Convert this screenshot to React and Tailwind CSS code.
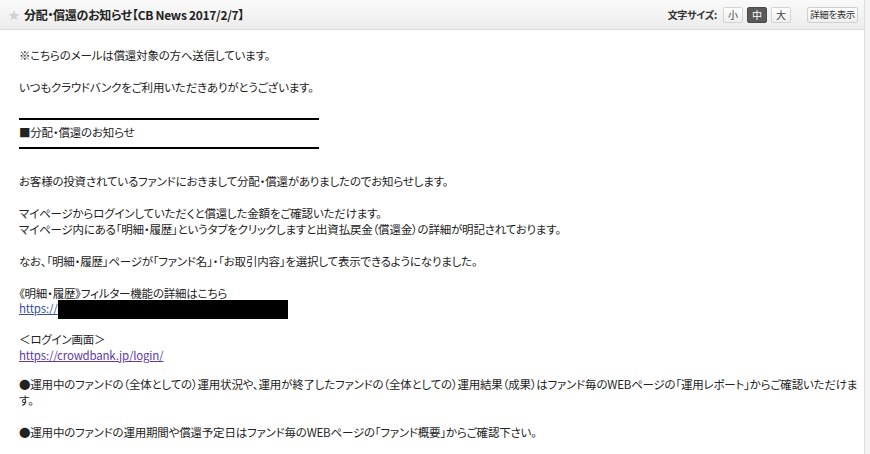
import React from 'react'

const FONT = "font-['Noto_Sans_CJK_JP','Noto_Sans',sans-serif]"

function SizeButton({ label, active }) {
  return (
    <span
      className={
        active
          ? 'flex h-[16px] w-[20px] items-center justify-center rounded-[2px] border border-[#4a4a4a] bg-[#5a5a5a] text-[10px] text-white'
          : 'flex h-[16px] w-[20px] items-center justify-center rounded-[2px] border border-[#d4d4d4] bg-gradient-to-b from-white to-[#eeeeee] text-[10px] text-[#444]'
      }
    >
      {label}
    </span>
  )
}

function Line({ children, className = '' }) {
  return <p className={'h-[15.5px] whitespace-nowrap leading-[15.5px] ' + className}>{children}</p>
}

export default function App() {
  return (
    <div className={`flex h-[454px] w-[870px] overflow-hidden bg-[#f4f4f4] ${FONT} [font-feature-settings:'palt']`}>
      <div className="flex w-[865px] flex-col overflow-hidden border-r border-[#dddddd] bg-white">
        <header className="flex h-[30px] shrink-0 items-center border-b border-[#dcdcdc] bg-gradient-to-b from-[#fafafa] to-[#ececec] pl-[8px] pr-[6px]">
          <span className="text-[12px] leading-none text-[#d0d0d0]">★</span>
          <h1 className="ml-[4px] text-[12px] font-bold tracking-[-0.3px] text-[#222]">
            分配・償還のお知らせ【CB News 2017/2/7】
          </h1>
          <div className="ml-auto flex items-center">
            <span className="mr-[6px] text-[10px] font-bold tracking-[-0.3px] text-[#333]">文字サイズ:</span>
            <div className="flex gap-[4px]">
              <SizeButton label="小" />
              <SizeButton label="中" active />
              <SizeButton label="大" />
            </div>
            <span className="ml-[16px] flex h-[16px] w-[51px] items-center justify-center rounded-[2px] border border-[#d0d0d0] bg-gradient-to-b from-white to-[#eeeeee] text-[9.5px] tracking-[-0.4px] text-[#333]">
              詳細を表示
            </span>
          </div>
        </header>

        <div className="pl-[19px] pt-[18px] text-[11.5px] tracking-[-0.2px] text-[#222]">
          <Line>※こちらのメールは償還対象の方へ送信しています。</Line>
          <Line className="mt-[16.5px]">いつもクラウドバンクをご利用いただきありがとうございます。</Line>
          <div className="mt-[22px] h-[2px] w-[300px] bg-black" />
          <Line className="mt-[5px]">■分配・償還のお知らせ</Line>
          <div className="mt-[7px] h-[2px] w-[300px] bg-black" />

          <Line className="mt-[25px]">お客様の投資されているファンドにおきまして分配・償還がありましたのでお知らせします。</Line>
          <Line className="mt-[16.5px]">マイページからログインしていただくと償還した金額をご確認いただけます。</Line>
          <Line>マイページ内にある「明細・履歴」というタブをクリックしますと出資払戻金（償還金）の詳細が明記されております。</Line>
          <Line className="mt-[16.5px]">なお、「明細・履歴」ページが「ファンド名」・「お取引内容」を選択して表示できるようになりました。</Line>
          <Line className="mt-[16.5px]">《明細・履歴》フィルター機能の詳細はこちら</Line>
          <div className="flex h-[15.5px] items-start">
            <a href="#" className="leading-[15.5px] text-[#3550a8] underline">https://</a>
            <span className="-mt-[1px] h-[19px] w-[230px] bg-black" />
          </div>
          <Line className="mt-[15.5px]">＜ログイン画面＞</Line>
          <Line>
            <a href="#" className="text-[#5b3ca6] underline">https://crowdbank.jp/login/</a>
          </Line>
          <Line className="mt-[14px]">
            ●運用中のファンドの（全体としての）運用状況や、運用が終了したファンドの（全体としての）運用結果（成果）はファンド毎のWEBページの「運用レポート」からご確認いただけま
          </Line>
          <Line>す。</Line>
          <Line className="mt-[16.5px]">●運用中のファンドの運用期間や償還予定日はファンド毎のWEBページの「ファンド概要」からご確認下さい。</Line>
        </div>
      </div>
    </div>
  )
}
